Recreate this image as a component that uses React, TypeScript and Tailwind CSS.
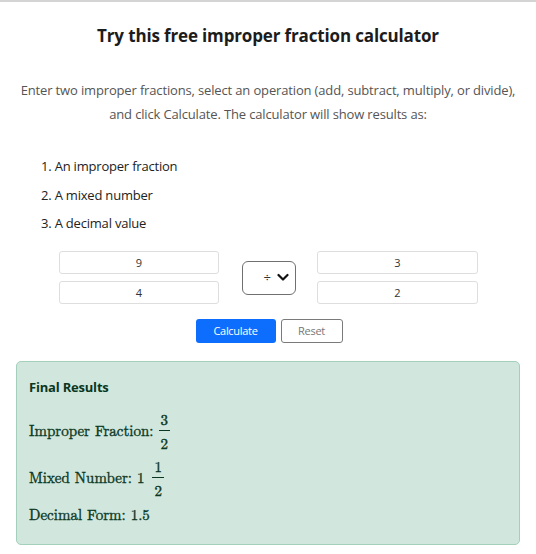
import React from "react";

const sans = { fontFamily: '"Open Sans", "Noto Sans", sans-serif' };
const serif = { fontFamily: '"Latin Modern Roman", "DejaVu Serif", "Liberation Serif", serif' };

function Frac({ n, d }: { n: string; d: string }) {
  return (
    <span className="inline-flex flex-col items-center ml-[5px] mr-[3px] text-[15px] leading-[17px]">
      <span className="px-[2px] pb-[3px]">{n}</span>
      <span className="block w-full h-px bg-[#0a3622]" />
      <span className="px-[2px] pt-[3px]">{d}</span>
    </span>
  );
}

export default function App() {
  return (
    <div className="w-[536px] h-[554px] bg-white border-t-2 border-[#d4d4d4] text-[#212529]" style={sans}>
      <h1 className="text-center font-bold text-[17px] leading-[24px] pt-[22px] text-[#1c1c1c] tracking-[-0.15px]">
        Try this free improper fraction calculator
      </h1>
      <p className="text-center text-[13px] leading-[24px] text-[#555] mt-[30px] px-[14px] tracking-[-0.15px]">
        Enter two improper fractions, select an operation (add, subtract, multiply, or divide),
        <br />
        and click Calculate. The calculator will show results as:
      </p>
      <ol className="mt-[30px] pl-[41px] text-[13px] leading-[20px] text-[#222] flex flex-col gap-[8.5px] tracking-[-0.2px]">
        <li>1. An improper fraction</li>
        <li>2. A mixed number</li>
        <li>3. A decimal value</li>
      </ol>
      <div className="mt-[18px] flex items-center pl-[59px]">
        <div className="flex flex-col gap-[7px] w-[160px]">
          <input readOnly value="9" className="h-[23px] w-full border border-[#dedede] rounded-[3px] text-center text-[11px] text-[#333] outline-none" />
          <input readOnly value="4" className="h-[23px] w-full border border-[#dedede] rounded-[3px] text-center text-[11px] text-[#333] outline-none" />
        </div>
        <div className="ml-[23px] w-[54px] h-[34px] border border-[#707070] rounded-[6px] flex items-center justify-end pr-[6px] gap-[6px]">
          <span className="text-[13px] text-[#333]">÷</span>
          <svg width="12" height="9" viewBox="0 0 12 9">
            <path d="M1.5 2 L6 6.5 L10.5 2" fill="none" stroke="#111" strokeWidth="2.2" strokeLinecap="round" strokeLinejoin="round" />
          </svg>
        </div>
        <div className="ml-[21px] flex flex-col gap-[7px] w-[161px]">
          <input readOnly value="3" className="h-[23px] w-full border border-[#dedede] rounded-[3px] text-center text-[11px] text-[#333] outline-none" />
          <input readOnly value="2" className="h-[23px] w-full border border-[#dedede] rounded-[3px] text-center text-[11px] text-[#333] outline-none" />
        </div>
      </div>
      <div className="mt-[15px] flex justify-center gap-[5px] pl-[2px]">
        <button className="w-[80px] h-[24px] bg-[#0d6efd] text-white text-[11px] rounded-[3px] tracking-[-0.3px]">Calculate</button>
        <button className="w-[62px] h-[24px] border border-[#7a7a7a] text-[#777] text-[11px] rounded-[3px] bg-white tracking-[-0.3px]">Reset</button>
      </div>
      <div className="mx-[16px] mt-[18px] h-[184px] bg-[#d1e7dd] border border-[#a3cfbb] rounded-[5px] text-[#0a3622] px-[12px] pt-[16px]">
        <div className="font-bold text-[13px] leading-[18px] tracking-[-0.2px]">Final Results</div>
        <div className="[-webkit-text-stroke:0.35px_#0a3622]">
          <div className="mt-[14px] text-[15px] flex items-center" style={serif}>
            <span>Improper Fraction:</span>
            <Frac n="3" d="2" />
          </div>
          <div className="mt-[6px] text-[15px] flex items-center" style={serif}>
            <span>Mixed Number: 1</span>
            <span className="w-[3px]" />
            <Frac n="1" d="2" />
          </div>
          <div className="mt-[5px] text-[15px]" style={serif}>Decimal Form: 1.5</div>
        </div>
      </div>
    </div>
  );
}
